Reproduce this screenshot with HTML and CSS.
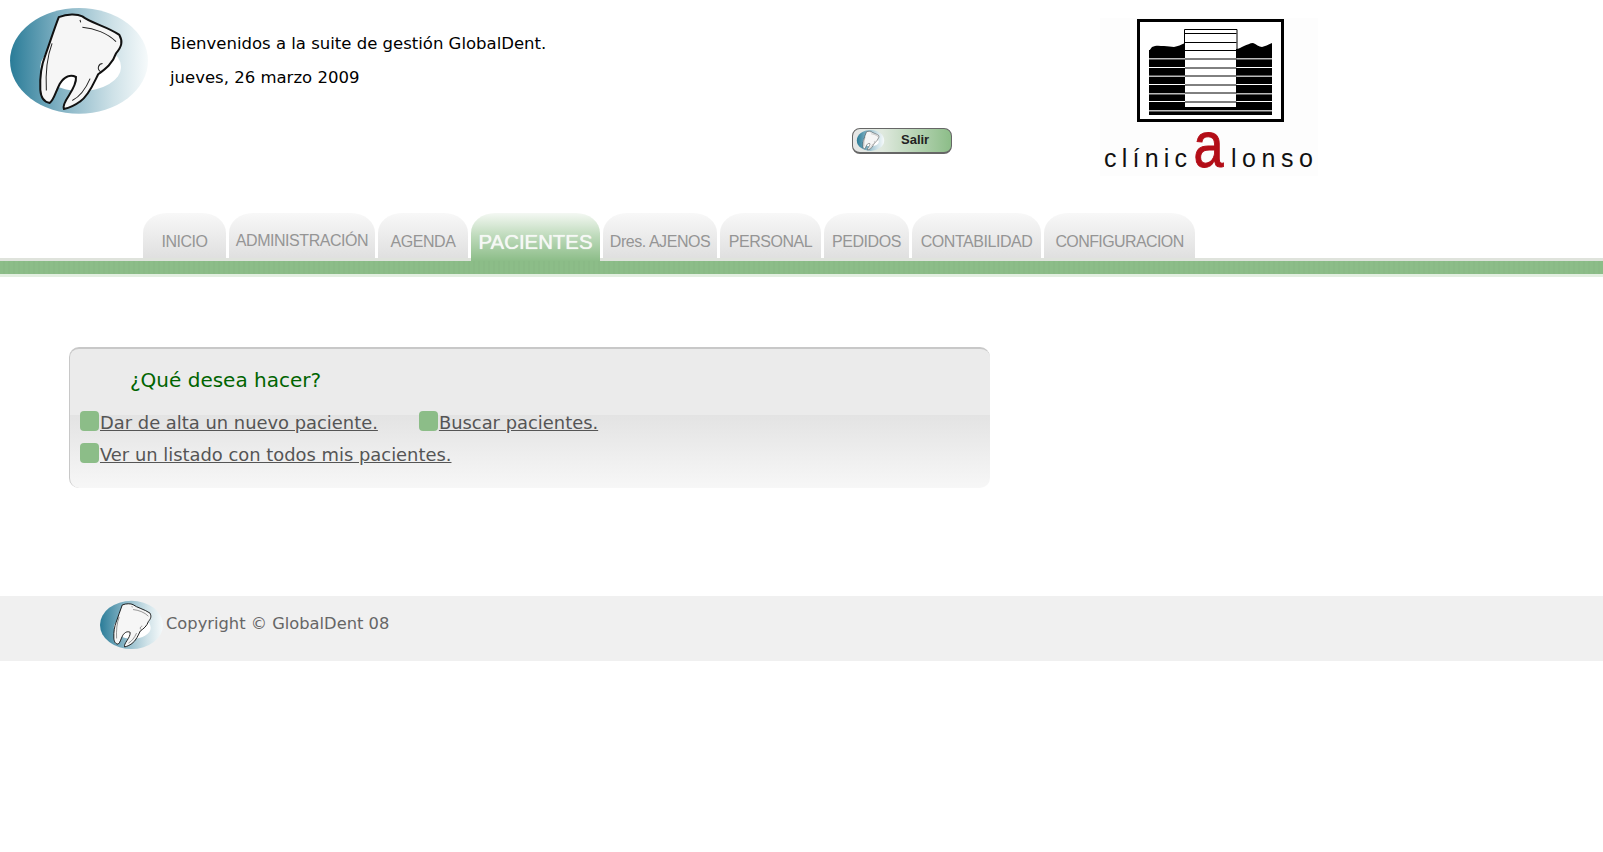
FILE: index.html
```html
<!DOCTYPE html>
<html lang="en">
<head>
    <meta charset="UTF-8">
    <title>GlobalDent</title>
    <link rel="stylesheet" href="styles.css">
</head>
<body>
    <!-- Tooth logo, used three times -->
    <svg class="defs" width="0" height="0">
        <defs>
            <linearGradient id="ovalFill" x1="0" y1="0" x2="1" y2="0">
                <stop offset="0" stop-color="#2a7c98"/>
                <stop offset="0.35" stop-color="#7fb0c2"/>
                <stop offset="0.75" stop-color="#cfe2e8"/>
                <stop offset="1" stop-color="#f6fafb"/>
            </linearGradient>
            <symbol id="tooth" viewBox="30 25 410 315">
                <ellipse cx="235" cy="182" rx="205" ry="157" fill="url(#ovalFill)"/>
                <ellipse cx="240" cy="200" rx="120" ry="72" fill="#fff"/>
                <path d="M175 52 C200 42 230 42 245 50 C270 70 320 80 355 105 C366 125 362 140 345 160 C335 190 315 205 292 222 C280 245 265 285 238 303 C222 315 205 322 190 325 C186 315 195 300 205 285 C218 265 228 248 226 230 C210 222 192 228 178 250 C165 275 160 300 148 307 C132 305 122 295 120 268 C118 225 125 190 135 165 C148 130 160 90 175 52 Z" fill="#f6f6f6" stroke="#111" stroke-width="6"/>
                <path d="M238 60 L240 68 M245 82 C280 85 320 100 345 125 M300 215 C285 205 295 190 305 190 M155 130 C140 170 135 215 138 270 M215 300 C235 290 255 265 268 235" fill="none" stroke="#222" stroke-width="3"/>
            </symbol>
        </defs>
    </svg>

    <!-- Header -->
    <header class="header">
        <svg class="logo"><use href="#tooth"/></svg>
        <div class="welcome">
            <p>Bienvenidos a la suite de gestión GlobalDent.</p>
            <p>jueves, 26 marzo 2009</p>
        </div>
        <a class="salir" href="#salir">
            <svg class="salir-logo"><use href="#tooth"/></svg>
            <span>Salir</span>
        </a>
        <svg class="clinica" viewBox="0 0 218 158">
            <rect width="218" height="158" fill="#fdfdfd"/>
            <rect x="38.500" y="2.500" width="144" height="100" fill="#fff" stroke="#000" stroke-width="3"/>
            <!-- skyline either side of the tower -->
            <path d="M49 33 L52 29 C56 27 60 28 64 28 C68 28 71 29 74 29 C78 28 81 27 85 25 L85 33 Z" fill="#000"/>
            <path d="M136 33 L136 31 C139 31 141 29 144 28 C147 27 150 25 153 25 C156 26 159 29 162 29 C165 28 168 27 172 25 L172 33 Z" fill="#000"/>
            <rect x="49" y="32" width="123" height="65" fill="#000"/>
            <g fill="#fff">
                <rect x="49" y="40" width="123" height="1.500" fill="#bbb"/>
                <rect x="49" y="49" width="123" height="1"/>
                <rect x="49" y="57.500" width="123" height="1.500" fill="#bbb"/>
                <rect x="49" y="66" width="123" height="1"/>
                <rect x="49" y="75" width="123" height="1.500" fill="#bbb"/>
                <rect x="49" y="83" width="123" height="1"/>
                <rect x="49" y="92" width="123" height="1.500" fill="#bbb"/>
            </g>
            <rect x="85" y="11" width="51" height="78" fill="#fff"/>
            <path d="M84.500 32 V11.500 H137 V32 M85 15.500 H136.500 M85 24.500 H136.500 M85 32.500 H136.500 M85 41 H136.500 M85 50 H136.500 M85 58 H136.500 M85 67 H136.500 M85 75 H136.500 M85 84 H136.500" fill="none" stroke="#000" stroke-width="1"/>
            <text class="clinica-text" x="4" y="149" textLength="83" lengthAdjust="spacing">clínic</text>
            <text class="clinica-a" x="93.500" y="149" textLength="30" lengthAdjust="spacingAndGlyphs">a</text>
            <text class="clinica-text" x="131" y="149" textLength="82" lengthAdjust="spacing">lonso</text>
        </svg>
    </header>

    <!-- Navigation Bar -->
    <nav class="tabs">
        <a class="tab tab-inicio" href="#inicio">INICIO</a>
        <a class="tab tab-admin" href="#administracion">ADMINISTRACIÓN</a>
        <a class="tab tab-agenda" href="#agenda">AGENDA</a>
        <a class="tab tab-active" href="#pacientes">PACIENTES</a>
        <a class="tab tab-dres" href="#ajenos">Dres. AJENOS</a>
        <a class="tab tab-personal" href="#personal">PERSONAL</a>
        <a class="tab tab-pedidos" href="#pedidos">PEDIDOS</a>
        <a class="tab tab-conta" href="#contabilidad">CONTABILIDAD</a>
        <a class="tab tab-config" href="#configuracion">CONFIGURACION</a>
    </nav>
    <div class="strip"></div>

    <!-- Main box -->
    <section class="panel">
        <h2>¿Qué desea hacer?</h2>
        <div class="actions">
            <a class="action" href="#alta">Dar de alta un nuevo paciente.</a>
            <a class="action" href="#buscar">Buscar pacientes.</a>
        </div>
        <div class="actions">
            <a class="action" href="#listado">Ver un listado con todos mis pacientes.</a>
        </div>
    </section>

    <!-- Footer -->
    <footer class="footer">
        <svg class="footer-logo"><use href="#tooth"/></svg>
        <span>Copyright © GlobalDent 08</span>
    </footer>
</body>
</html>
```

FILE: styles.css
```css
body {
    font-family: "DejaVu Sans", Verdana, sans-serif;
    background-color: #fff;
    margin: 0;
    padding: 0;
}

.defs {
    display: block;
    height: 0;
}

/* Header */
.header {
    display: flex;
    align-items: flex-start;
    height: 213px;
    padding: 8px 0 0 10px;
    box-sizing: border-box;
}

.logo {
    width: 138px;
    height: 106px;
    flex: none;
}

.welcome {
    width: 682px;
    margin-left: 22px;
    padding-top: 26px;
    font-size: 16.500px;
    color: #000;
    flex: none;
}

.welcome p {
    margin: 0 0 15px;
    line-height: 19px;
}

.salir {
    display: flex;
    align-items: center;
    width: 100px;
    height: 26px;
    margin-top: 120px;
    padding-left: 3px;
    padding-bottom: 3px;
    box-sizing: border-box;
    border: 1px solid #666;
    border-bottom-width: 2px;
    border-radius: 8px;
    background: linear-gradient(to right, #e6e6e6 0%, #dfe9de 30%, #8cbd88 100%);
    color: #222;
    font-family: "Liberation Sans", Arial, sans-serif;
    font-size: 13px;
    font-weight: bold;
    text-decoration: none;
    flex: none;
}

.salir-logo {
    width: 29px;
    height: 21px;
    margin-top: 2px;
    flex: none;
}

.salir span {
    margin-left: 16px;
}

.clinica {
    width: 218px;
    height: 158px;
    margin-left: 148px;
    margin-top: 10px;
    overflow: visible;
    flex: none;
}

.clinica-text {
    font-family: "Liberation Sans", Arial, sans-serif;
    font-size: 25px;
    fill: #111;
}

.clinica-a {
    font-family: "Liberation Sans", Arial, sans-serif;
    font-size: 64px;
    fill: #b30d17;
    stroke: #b30d17;
    stroke-width: 1px;
}

/* Navigation Bar */
.tabs {
    display: flex;
    align-items: flex-start;
    gap: 3px;
    height: 48px;
    padding-left: 143px;
    background: linear-gradient(to bottom, transparent 45px, #dfe3dc 45px);
}

.tab {
    display: block;
    height: 45px;
    padding-top: 20px;
    box-sizing: border-box;
    border-radius: 24px 24px 0 0 / 20px 20px 0 0;
    background: linear-gradient(to bottom, #f8f8f8 0%, #eeeeee 40%, #e0e0e0 100%);
    color: #959595;
    font-family: "Liberation Sans", Arial, sans-serif;
    font-size: 16px;
    letter-spacing: -0.450px;
    line-height: 18px;
    text-align: center;
    text-decoration: none;
    white-space: nowrap;
    flex: none;
}

.tab-inicio { width: 83px; }
.tab-admin { width: 146px; padding-top: 19px; }
.tab-agenda { width: 90px; }
.tab-dres { width: 114px; }
.tab-personal { width: 101px; }
.tab-pedidos { width: 85px; }
.tab-conta { width: 129px; }
.tab-config { width: 151px; letter-spacing: -0.600px; }

.tab-active {
    width: 129px;
    height: 48px;
    padding-top: 19px;
    background: linear-gradient(to bottom, #f4f8f3 0%, #bcd9b9 50%, #8cbd88 100%);
    color: #f6f8f5;
    font-size: 20.400px;
    letter-spacing: 0;
    line-height: 20px;
    text-shadow: 0 0 1px #fff;
}

.strip {
    height: 13px;
    background: repeating-linear-gradient(to right, #8cbd88 0, #8cbd88 3px, #8aba86 3px, #8aba86 5px);
    border-bottom: 3px solid #e3efe1;
}

/* Main box */
.panel {
    width: 921px;
    height: 141px;
    margin: 70px 0 108px 69px;
    box-sizing: border-box;
    padding: 19px 0 0 10px;
    border-top: 2px solid #c8c8c8;
    border-left: 1px solid #c8c8c8;
    border-radius: 10px;
    background: linear-gradient(to bottom, #ebebeb 0, #ebebeb 66px, #e3e3e3 66px, #f7f7f7 100%);
}

.panel h2 {
    margin: 0 0 19px 50px;
    color: #006400;
    font-size: 20px;
    font-weight: normal;
    line-height: 24px;
}

.actions {
    display: flex;
    gap: 41px;
    margin-bottom: 8px;
}

.action {
    display: flex;
    align-items: flex-start;
    color: #555;
    font-size: 17.900px;
    line-height: 24px;
    text-decoration: underline;
}

.action::before {
    content: "";
    width: 19px;
    height: 20px;
    margin-right: 1px;
    border-radius: 4px;
    background-color: #8cbd88;
}

/* Footer */
.footer {
    display: flex;
    align-items: center;
    height: 65px;
    padding-left: 100px;
    background-color: #f0f0f0;
    color: #666;
    font-size: 16.300px;
}

.footer-logo {
    width: 63px;
    height: 50px;
    margin-right: 3px;
    margin-bottom: 8px;
}

.footer span {
    margin-bottom: 11px;
}
```
